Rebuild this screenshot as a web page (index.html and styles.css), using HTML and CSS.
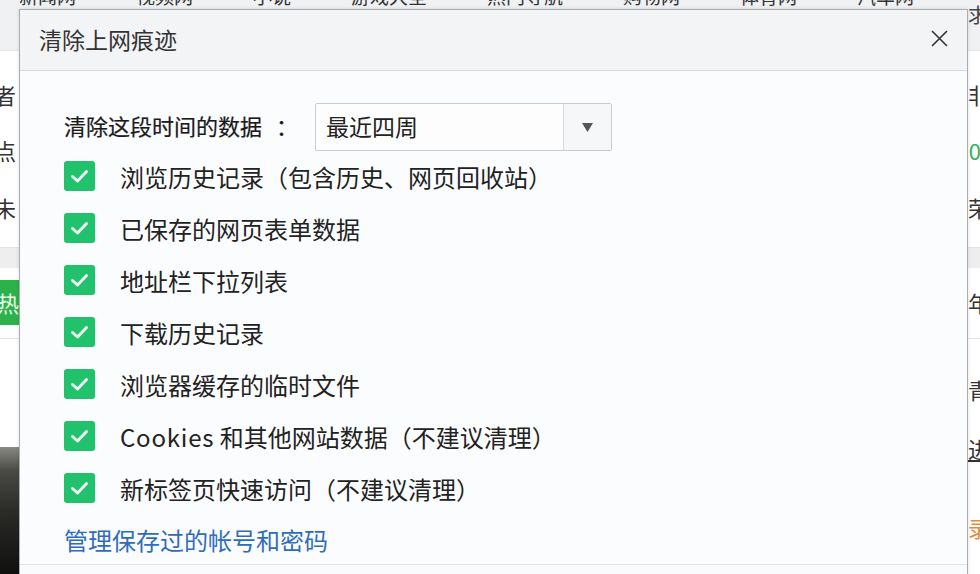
FILE: index.html
```html
<!DOCTYPE html>
<html lang="zh-CN">
<head>
<meta charset="utf-8">
<title>清除上网痕迹</title>
<link rel="stylesheet" href="styles.css">
</head>
<body>
<div class="page">
  <div class="topbar">
    <div class="nav">
      <span>新闻网</span><span>视频网</span><span>小说</span><span>游戏大全</span><span>热门导航</span><span>购物网</span><span>体育网</span><span>汽车网</span>
    </div>
    <span class="tb-right">求</span>
  </div>
  <div class="row r1"><span class="l">者</span><span class="r">非</span></div>
  <div class="row r2"><span class="l">点</span><span class="r green">0</span></div>
  <div class="row r3"><span class="l">未</span><span class="r">荣</span></div>
  <div class="band"></div>
  <div class="row r4"><span class="hot">热</span><span class="r">年</span></div>
  <div class="hr"></div>
  <div class="row r5"><span class="l"></span><span class="r">青</span></div>
  <div class="row last">
    <div class="photo"></div>
    <div class="rcol"><span class="r link-u">进</span><span class="r orange">录</span></div>
  </div>
</div>

<div class="dialog">
  <div class="titlebar">
    <span class="title">清除上网痕迹</span>
    <svg class="close" width="17" height="17" viewBox="0 0 17 17"><path d="M1 1 L16 16 M16 1 L1 16" stroke="#333" stroke-width="1.6" fill="none"/></svg>
  </div>
  <div class="body">
    <div class="range">
      <span class="range-label">清除这段时间的数据<span class="colon">：</span></span>
      <div class="select">
        <span class="select-text">最近四周</span>
        <span class="select-btn"><svg width="11" height="9" viewBox="0 0 11 9"><polygon points="0,0 11,0 5.5,9" fill="#555"/></svg></span>
      </div>
    </div>
    <ul class="options">
      <li class="opt"><span class="cb"><svg width="31" height="30" viewBox="0 0 31 30"><path d="M8.5 15.5 L13.5 20 L22.5 10.5" stroke="#ecfcf2" stroke-width="3" fill="none" stroke-linecap="round" stroke-linejoin="round"/></svg></span><span class="opt-text">浏览历史记录（包含历史、网页回收站）</span></li>
      <li class="opt"><span class="cb"><svg width="31" height="30" viewBox="0 0 31 30"><path d="M8.5 15.5 L13.5 20 L22.5 10.5" stroke="#ecfcf2" stroke-width="3" fill="none" stroke-linecap="round" stroke-linejoin="round"/></svg></span><span class="opt-text">已保存的网页表单数据</span></li>
      <li class="opt"><span class="cb"><svg width="31" height="30" viewBox="0 0 31 30"><path d="M8.5 15.5 L13.5 20 L22.5 10.5" stroke="#ecfcf2" stroke-width="3" fill="none" stroke-linecap="round" stroke-linejoin="round"/></svg></span><span class="opt-text">地址栏下拉列表</span></li>
      <li class="opt"><span class="cb"><svg width="31" height="30" viewBox="0 0 31 30"><path d="M8.5 15.5 L13.5 20 L22.5 10.5" stroke="#ecfcf2" stroke-width="3" fill="none" stroke-linecap="round" stroke-linejoin="round"/></svg></span><span class="opt-text">下载历史记录</span></li>
      <li class="opt"><span class="cb"><svg width="31" height="30" viewBox="0 0 31 30"><path d="M8.5 15.5 L13.5 20 L22.5 10.5" stroke="#ecfcf2" stroke-width="3" fill="none" stroke-linecap="round" stroke-linejoin="round"/></svg></span><span class="opt-text">浏览器缓存的临时文件</span></li>
      <li class="opt"><span class="cb"><svg width="31" height="30" viewBox="0 0 31 30"><path d="M8.5 15.5 L13.5 20 L22.5 10.5" stroke="#ecfcf2" stroke-width="3" fill="none" stroke-linecap="round" stroke-linejoin="round"/></svg></span><span class="opt-text"><span class="latin">Cookies</span> 和其他网站数据（不建议清理）</span></li>
      <li class="opt"><span class="cb"><svg width="31" height="30" viewBox="0 0 31 30"><path d="M8.5 15.5 L13.5 20 L22.5 10.5" stroke="#ecfcf2" stroke-width="3" fill="none" stroke-linecap="round" stroke-linejoin="round"/></svg></span><span class="opt-text">新标签页快速访问（不建议清理）</span></li>
    </ul>
    <div class="manage"><a class="manage-link">管理保存过的帐号和密码</a></div>
  </div>
  <div class="footer"></div>
</div>
</body>
</html>
```

FILE: styles.css
```css
html, body {
  margin: 0;
  padding: 0;
}
body {
  width: 980px;
  height: 574px;
  overflow: hidden;
  position: relative;
  background: #ffffff;
  font-family: "Noto Sans CJK SC", "Noto Sans", sans-serif;
}

/* ---------- background page ---------- */
.page {
  width: 980px;
  height: 574px;
  overflow: hidden;
}
.topbar {
  height: 50px;
  background: #eff1f3;
  border-bottom: 1px solid #e2e4e6;
  display: flex;
  justify-content: space-between;
  overflow: hidden;
}
.nav {
  display: flex;
  gap: 60px;
  margin-top: -14px;
  padding-left: 19px;
  font-size: 19px;
  line-height: 20px;
  color: #333;
}
.tb-right {
  font-size: 20px;
  line-height: 22px;
  margin-top: 4px;
  margin-right: -8px;
  color: #444;
}
.row {
  display: flex;
  justify-content: space-between;
  font-size: 22px;
  line-height: 26px;
  height: 26px;
  color: #333;
}
.row .l {
  margin-left: -6px;
}
.row .r {
  margin-right: -10px;
}
.r1 { margin-top: 30px; }
.r2 { margin-top: 30px; }
.r3 { margin-top: 31px; }
.row .green {
  color: #2fb35a;
  margin-right: -1px;
}
.orange { color: #e8893a; }
.band {
  margin-top: 27px;
  height: 20px;
  background: #eeeeee;
  border-top: 1px solid #e2e2e2;
}
.r4 {
  margin-top: 12px;
  height: 45px;
  line-height: 45px;
}
.hot {
  width: 19px;
  height: 45px;
  background: #2cb24a;
  color: #eaffea;
  overflow: hidden;
  text-indent: -3px;
}
.hr {
  margin-top: 13px;
  height: 1px;
  background: #e5e5e5;
}
.r5 { margin-top: 37px; }
.last {
  margin-top: 33px;
  height: 150px;
  align-items: flex-start;
}
.photo {
  margin-top: 12px;
  width: 19px;
  height: 132px;
  background: linear-gradient(180deg, #8a8a84 0%, #4a4a45 18%, #2a2a27 50%, #0e0e0e 100%);
}
.rcol {
  display: flex;
  flex-direction: column;
  align-items: flex-end;
  gap: 53px;
}
.link-u {
  text-decoration: underline;
}

/* ---------- dialog ---------- */
.dialog {
  position: absolute;
  left: 19px;
  top: 9px;
  width: 947px;
  height: 600px;
  border: 1px solid #a9acb0;
  background: #fbfcfe;
  box-shadow: 0 0 4px rgba(0, 0, 0, 0.12);
}
.titlebar {
  height: 60px;
  background: #f3f4f6;
  border-bottom: 1px solid #d8dadd;
  display: flex;
  align-items: center;
  justify-content: space-between;
  padding: 0 19px;
}
.title {
  font-size: 23px;
  line-height: 30px;
  color: #333;
  margin-top: -2px;
}
.close {
  display: block;
  margin-top: -4px;
}
.body {
  padding: 32px 0 0 44px;
}
.range {
  display: flex;
  align-items: center;
  height: 48px;
}
.range-label {
  width: 251px;
  font-size: 22px;
  line-height: 30px;
  color: #1a1a1a;
  margin-top: -4px;
  -webkit-text-stroke: 0.2px #1a1a1a;
  white-space: nowrap;
}
.colon {
  margin-left: 14px;
}
.select {
  width: 297px;
  height: 48px;
  box-sizing: border-box;
  border: 1px solid #c9cbcd;
  border-radius: 2px;
  background: #fdfdfd;
  display: flex;
}
.select-text {
  flex: 1;
  padding-left: 10px;
  font-size: 23px;
  line-height: 44px;
  color: #222;
}
.select-btn {
  width: 47px;
  border-left: 1px solid #d9dadb;
  background: #f6f7f8;
  display: flex;
  align-items: center;
  justify-content: center;
}
.select-btn svg {
  display: block;
}
.options {
  list-style: none;
  margin: 0;
  padding: 0;
}
.opt {
  height: 52px;
  display: flex;
  align-items: center;
}
.cb {
  width: 31px;
  height: 30px;
  border-radius: 3px;
  background: #22c16b;
  margin-right: 25px;
  margin-top: -3px;
  flex: none;
}
.cb svg {
  display: block;
}
.opt-text {
  font-size: 24px;
  line-height: 30px;
  color: #222;
  white-space: nowrap;
}
.latin {
  letter-spacing: 0.8px;
}
.manage {
  height: 49px;
  display: flex;
  align-items: center;
}
.manage-link {
  font-size: 24px;
  line-height: 30px;
  color: #2f6dbb;
  cursor: pointer;
}
.footer {
  border-top: 1px solid #e1e3e6;
  height: 60px;
  background: #fafbfc;
}
```
